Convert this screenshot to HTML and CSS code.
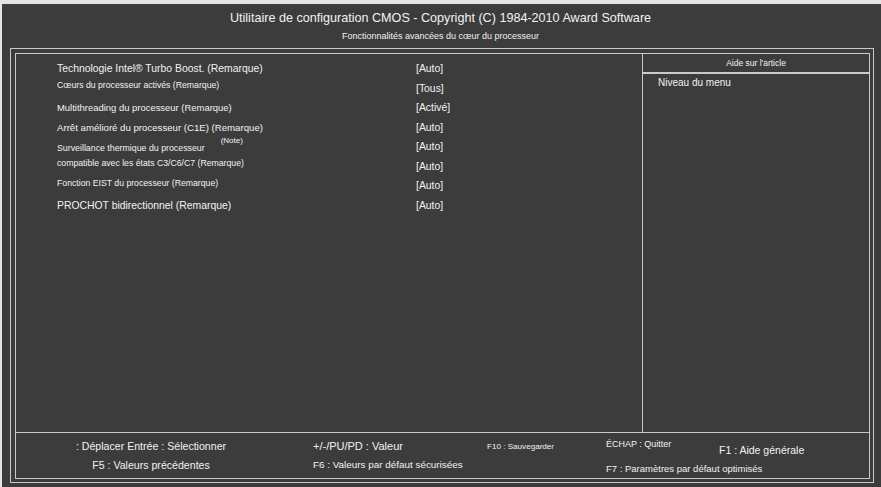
FILE: index.html
```html
<!DOCTYPE html>
<html lang="fr">
<head>
    <meta charset="UTF-8">
    <meta name="viewport" content="width=device-width, initial-scale=1.0">
    <title>Fonctionnalités avancées du cœur du processeur</title>
    <link rel="stylesheet" href="styles.css">
</head>
<body>
    <div class="screen">
        <div class="title">Utilitaire de configuration CMOS - Copyright (C) 1984-2010 Award Software</div>
        <div class="subtitle">Fonctionnalités avancées du cœur du processeur</div>

        <div class="frame">
            <div class="inner">
                <div class="menu">
                    <div class="row">
                        <span class="label big">Technologie Intel® Turbo Boost. (Remarque)</span>
                        <span class="value">[Auto]</span>
                    </div>
                    <div class="row">
                        <span class="label tiny up">Cœurs du processeur activés (Remarque)</span>
                        <span class="value">[Tous]</span>
                    </div>
                    <div class="row">
                        <span class="label small">Multithreading du processeur (Remarque)</span>
                        <span class="value">[Activé]</span>
                    </div>
                    <div class="row">
                        <span class="label mid">Arrêt amélioré du processeur (C1E) (Remarque)</span>
                        <span class="value">[Auto]</span>
                    </div>
                    <div class="row">
                        <span class="label thermal">Surveillance thermique du processeur<span class="note">(Note)</span></span>
                        <span class="value">[Auto]</span>
                    </div>
                    <div class="row">
                        <span class="label tiny up">compatible avec les états C3/C6/C7 (Remarque)</span>
                        <span class="value">[Auto]</span>
                    </div>
                    <div class="row">
                        <span class="label tiny up">Fonction EIST du processeur (Remarque)</span>
                        <span class="value">[Auto]</span>
                    </div>
                    <div class="row">
                        <span class="label big">PROCHOT bidirectionnel (Remarque)</span>
                        <span class="value">[Auto]</span>
                    </div>
                </div>

                <div class="help">
                    <div class="help-head">Aide sur l'article</div>
                    <div class="help-body">Niveau du menu</div>
                </div>

                <div class="keys">
                    <span class="key centre">: Déplacer Entrée : Sélectionner</span>
                    <span class="key value-key">+/-/PU/PD : Valeur</span>
                    <span class="key mini">F10 : Sauvegarder</span>
                    <span class="key small up">ÉCHAP : Quitter</span>
                    <span class="key large down">F1 : Aide générale</span>
                    <span class="key centre">F5 : Valeurs précédentes</span>
                    <span class="key safe">F6 : Valeurs par défaut sécurisées</span>
                    <span class="key"></span>
                    <span class="key optimal down wide">F7 : Paramètres par défaut optimisés</span>
                </div>
            </div>
        </div>
    </div>
</body>
</html>
```

FILE: styles.css
```css
html {
    background-color: #e4e4e4;
}

body {
    margin: 0;
    padding: 4px 0 0 2px;
    font-family: "Liberation Sans", Arial, sans-serif;
    color: #f2f2f2;
}

.screen {
    background-color: #3c3c3c;
    height: 483px;
    padding-top: 7px;
    box-sizing: border-box;
}

.title {
    text-align: center;
    font-size: 12.6px;
    line-height: 14px;
    margin-left: -2px;
}

.subtitle {
    text-align: center;
    font-size: 9px;
    line-height: 12px;
    margin-top: 5px;
    margin-left: -2px;
}

/* double border box */
.frame {
    margin: 6px 7px 0 8px;
    border: 1px solid #c9c9c9;
    padding: 4px 3px 3px 4px;
}

.inner {
    border: 1px solid #c9c9c9;
    display: grid;
    grid-template-columns: 626px 1fr;
    grid-template-rows: 378px 46px;
}

.menu {
    padding-top: 5px;
}

.row {
    display: grid;
    grid-template-columns: 359px auto;
    align-items: center;
    height: 19.5px;
    padding-left: 41px;
}

.label.big { font-size: 10.4px; }
.label.mid { font-size: 9.65px; }
.label.small { font-size: 9.45px; }
.label.thermal { font-size: 8.8px; }
.label.tiny { font-size: 8.7px; }
.label.up { margin-bottom: 6px; }

.note {
    font-size: 8px;
    line-height: 0;
    margin-left: 16px;
    vertical-align: 8px;
}

.value {
    font-size: 10.4px;
}

.help {
    border-left: 1px solid #c9c9c9;
}

.help-head {
    height: 18px;
    line-height: 18px;
    text-align: center;
    font-size: 8.5px;
    border-bottom: 2px solid #c9c9c9;
}

.help-body {
    padding: 3px 0 0 15px;
    font-size: 10px;
}

/* key legend */
.keys {
    grid-column: 1 / 3;
    border-top: 1px solid #c9c9c9;
    display: grid;
    grid-template-columns: 297px 174px 119px 113px 1fr;
    grid-template-rows: 18.5px 18.5px;
    align-items: center;
    padding-top: 4px;
    font-size: 10.6px;
}

.key {
    white-space: nowrap;
}

.key.centre {
    text-align: center;
    padding-right: 27px;
}

.key.value-key { font-size: 11px; }
.key.mini { font-size: 8.1px; }
.key.small { font-size: 9px; }
.key.safe { font-size: 9.9px; }
.key.optimal { font-size: 9.5px; }
.key.large { font-size: 10.5px; }
.key.up { margin-bottom: 4px; }
.key.down { margin-top: 7px; }
.key.wide { grid-column: 4 / 6; }
```
